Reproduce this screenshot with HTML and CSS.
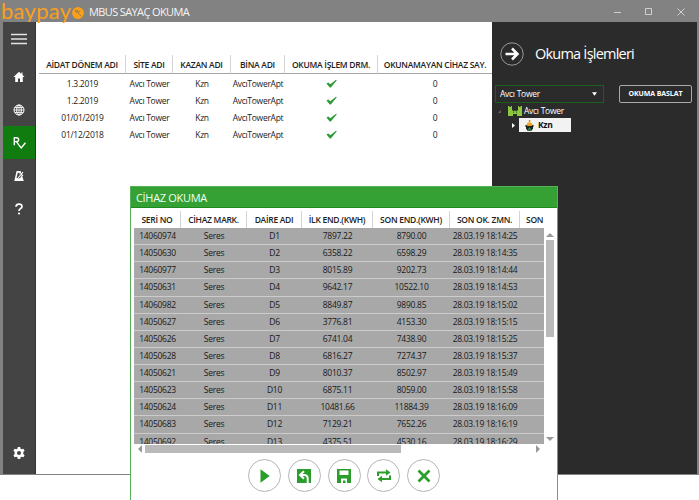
FILE: index.html
```html
<!DOCTYPE html>
<html lang="tr">
<head>
<meta charset="utf-8">
<title>MBUS SAYAÇ OKUMA</title>
<link rel="stylesheet" href="styles.css">
</head>
<body>
<div class="window">
  <header class="titlebar">
    <span class="brand">baypay</span>
    <svg class="brand-mark" viewBox="0 0 12 12"><circle cx="6" cy="6" r="5.900" fill="#f9a01b"/><path d="M3 4.500l2.500 1M5 3l1.500 2.500M5.500 5.500l4 4M8 3.500l-1.500 2" fill="none" stroke="#8a7656" stroke-width=".9"/><circle cx="4" cy="3.500" r=".8" fill="#8a7656"/></svg>
    <h1>MBUS SAYAÇ OKUMA</h1>
    <svg class="controls" viewBox="0 0 72 10" fill="none" stroke="#d0d0d0"><path d="M0 5.500h7M31.500 1.500h6v6h-6zM63.500 1.500l7 7m0-7l-7 7"/></svg>
  </header>
  <div class="body">
    <nav class="sidebar">
      <a class="burger"><svg viewBox="0 0 16 12"><path d="M0 1.500h16M0 6h16M0 10.500h16" stroke="#e4e4e4" stroke-width="1.600"/></svg></a>
      <a><svg viewBox="0 0 12 12"><path d="M6 .8L.5 6h1.700v5h2.800V7.500h2V11h2.800V6h1.700L9.500 4V1.500H8.300v1.400z" fill="#fff"/></svg></a>
      <a><svg viewBox="0 0 12 12" fill="none" stroke="#fff"><circle cx="6" cy="6" r="5"/><ellipse cx="6" cy="6" rx="2.300" ry="5"/><path d="M1 6h10M1.800 3.500h8.400M1.800 8.500h8.400M6 1v10" stroke-width=".8"/></svg></a>
      <a class="active"><svg viewBox="0 0 12 12" fill="none" stroke="#fff" stroke-width="1.300"><path d="M1.200 8.500V1.600h2q2 0 2 1.800t-2 1.800h-2m2 0l2.300 3.300M5.500 8.600L7.600 11l3.900-4.800"/></svg></a>
      <a><svg viewBox="0 0 12 12"><path d="M1.300 11L3.600 1h4L10.800 11z" fill="#fff"/><path d="M3.500 8L4.800 2.800h1.600L7.500 8z" fill="#444"/><path d="M5 8l5.500-6" stroke="#444" stroke-width="2.200"/><path d="M5 8l5-5.800M8 4.200l2 1.500" stroke="#fff" stroke-width="1.100"/></svg></a>
      <a><svg viewBox="0 0 12 12"><path d="M3 3.800Q3.100 1.200 6 1.200t3 2.300Q9 4.800 7.300 5.800 6 6.500 6 8" fill="none" stroke="#fff" stroke-width="1.700"/><circle cx="6" cy="10.500" r="1.100" fill="#fff"/></svg></a>
      <a class="settings"><svg viewBox="0 0 12 12"><path d="M4.800 0h2.400l.4 1.700 1.100.6 1.700-.6 1.200 2.100L10.300 5v2l1.300 1.200-1.200 2.100-1.700-.6-1.100.6L7.200 12H4.800l-.4-1.700-1.100-.6-1.700.6L.4 8.200 1.700 7V5L.4 3.800l1.200-2.100 1.700.6 1.100-.6z" fill="#fff"/><circle cx="6" cy="6" r="2" fill="#444"/></svg></a>
    </nav>
    <main>
      <table class="grid periods">
        <colgroup><col class="p1"><col class="p2"><col class="p3"><col class="p4"><col class="p5"><col class="p6"></colgroup>
        <thead><tr><th>AİDAT DÖNEM ADI</th><th>SİTE ADI</th><th>KAZAN ADI</th><th>BİNA ADI</th><th>OKUMA İŞLEM DRM.</th><th>OKUNAMAYAN CİHAZ SAY.</th></tr></thead>
        <tbody>
          <tr><td>1.3.2019</td><td>Avcı Tower</td><td>Kzn</td><td>AvcıTowerApt</td><td><svg class="tick" viewBox="0 0 11 9"><path d="M.5 4.500l1.800-1 2 1.800L10 .7l.8.5L4.800 8.500h-1z"/></svg></td><td>0</td></tr>
          <tr><td>1.2.2019</td><td>Avcı Tower</td><td>Kzn</td><td>AvcıTowerApt</td><td><svg class="tick" viewBox="0 0 11 9"><path d="M.5 4.500l1.800-1 2 1.800L10 .7l.8.5L4.800 8.500h-1z"/></svg></td><td>0</td></tr>
          <tr><td>01/01/2019</td><td>Avcı Tower</td><td>Kzn</td><td>AvcıTowerApt</td><td><svg class="tick" viewBox="0 0 11 9"><path d="M.5 4.500l1.800-1 2 1.800L10 .7l.8.5L4.800 8.500h-1z"/></svg></td><td>0</td></tr>
          <tr><td>01/12/2018</td><td>Avcı Tower</td><td>Kzn</td><td>AvcıTowerApt</td><td><svg class="tick" viewBox="0 0 11 9"><path d="M.5 4.500l1.800-1 2 1.800L10 .7l.8.5L4.800 8.500h-1z"/></svg></td><td>0</td></tr>
        </tbody>
      </table>
    </main>
    <aside>
      <div class="panel-head">
        <svg viewBox="0 0 24 24" fill="none"><circle cx="12" cy="12" r="11.200" stroke="#999"/><path d="M5.500 12h12M12 6.500l5.500 5.500-5.500 5.500" stroke="#fff" stroke-width="2.500"/></svg>
        <h2>Okuma İşlemleri</h2>
      </div>
      <div class="panel-tools">
        <div class="select"><span>Avcı Tower</span><svg viewBox="0 0 5 4"><path d="M0 .3h5L2.500 3.700z" fill="#fff"/></svg></div>
        <button>OKUMA BASLAT</button>
      </div>
      <div class="tree">
        <div class="node"><svg class="collapse" viewBox="0 0 4 4"><path d="M4 0v4H0z" fill="#666"/></svg><svg class="castle" viewBox="0 0 14 10"><path d="M0 0h1.500v1H3V0h1v4l2 1.500L7 4l1 1.500L10 4V0h1v1h1.500V0H14v10H9V8H5v2H0z" fill="#8cc63f"/><path d="M5 6.300h1m2 0h1" stroke="#2b2b2b" stroke-width=".7"/></svg><span>Avcı Tower</span></div>
        <div class="node child"><svg class="expand" viewBox="0 0 3 5"><path d="M0 0l3 2.500L0 5z" fill="#fff"/></svg><div class="leaf"><svg viewBox="0 0 9 11"><path d="M1 5h7l1 1-1 1v1.500L6.500 10.700h-4L1 8.500V7L0 6z" fill="#17251c"/><path d="M1.300 5Q2 2.300 4.500 2.300T7.700 5L6.500 6h-4z" fill="#eea51c"/><path d="M3.800 0h1.500v2H3.800z" fill="#d98b18"/><path d="M3 9l1.500-1.800L6 9v.8H3z" fill="#26945a"/></svg><b>Kzn</b></div></div>
      </div>
    </aside>
  </div>
</div>
<section class="dialog">
  <h3>CİHAZ OKUMA</h3>
  <div class="viewport">
    <div class="list">
      <table class="grid devices">
        <colgroup><col class="d1"><col class="d2"><col class="d3"><col class="d4"><col class="d5"><col class="d6"><col class="d7"></colgroup>
        <thead><tr><th>SERİ NO</th><th>CİHAZ MARK.</th><th>DAİRE ADI</th><th>İLK END.(KWH)</th><th>SON END.(KWH)</th><th>SON OK. ZMN.</th><th>SON</th></tr></thead>
        <tbody>
          <tr><td>14060974</td><td>Seres</td><td>D1</td><td>7897.22</td><td>8790.00</td><td>28.03.19 18:14:25</td><td></td></tr>
          <tr><td>14050630</td><td>Seres</td><td>D2</td><td>6358.22</td><td>6598.29</td><td>28.03.19 18:14:35</td><td></td></tr>
          <tr><td>14060977</td><td>Seres</td><td>D3</td><td>8015.89</td><td>9202.73</td><td>28.03.19 18:14:44</td><td></td></tr>
          <tr><td>14050631</td><td>Seres</td><td>D4</td><td>9642.17</td><td>10522.10</td><td>28.03.19 18:14:53</td><td></td></tr>
          <tr><td>14060982</td><td>Seres</td><td>D5</td><td>8849.87</td><td>9890.85</td><td>28.03.19 18:15:02</td><td></td></tr>
          <tr><td>14050627</td><td>Seres</td><td>D6</td><td>3776.81</td><td>4153.30</td><td>28.03.19 18:15:15</td><td></td></tr>
          <tr><td>14050626</td><td>Seres</td><td>D7</td><td>6741.04</td><td>7438.90</td><td>28.03.19 18:15:25</td><td></td></tr>
          <tr><td>14050628</td><td>Seres</td><td>D8</td><td>6816.27</td><td>7274.37</td><td>28.03.19 18:15:37</td><td></td></tr>
          <tr><td>14050621</td><td>Seres</td><td>D9</td><td>8010.37</td><td>8502.97</td><td>28.03.19 18:15:49</td><td></td></tr>
          <tr><td>14050623</td><td>Seres</td><td>D10</td><td>6875.11</td><td>8059.00</td><td>28.03.19 18:15:58</td><td></td></tr>
          <tr><td>14050624</td><td>Seres</td><td>D11</td><td>10481.66</td><td>11884.39</td><td>28.03.19 18:16:09</td><td></td></tr>
          <tr><td>14050683</td><td>Seres</td><td>D12</td><td>7129.21</td><td>7652.26</td><td>28.03.19 18:16:19</td><td></td></tr>
          <tr><td>14050692</td><td>Seres</td><td>D13</td><td>4375.51</td><td>4530.16</td><td>28.03.19 18:16:29</td><td></td></tr>
        </tbody>
      </table>
    </div>
    <div class="vscroll"><i class="up"></i><b></b><i class="down"></i></div>
  </div>
  <div class="hscroll"><i class="left"></i><b></b><i class="right"></i></div>
  <div class="actions">
    <a><svg viewBox="0 0 14 14"><path d="M2.500 .3L11.700 7l-9.200 6.700z"/></svg></a>
    <a><svg viewBox="0 0 14 14"><path d="M0 0h14v14H0z"/><path d="M7 2.200L3 6l4 3.800M3.500 6h4.200q3 .2 3 3.500V14" fill="none" stroke="#fff" stroke-width="2"/></svg></a>
    <a><svg viewBox="0 0 14 14"><path d="M0 0h14v14H0z"/><path d="M2.500 1.500h9v4.500h-9zM4 9.500h6V14H8.500v-2.500H6V14H4z" fill="#fff"/></svg></a>
    <a><svg viewBox="0 0 14 14"><path d="M1 7V3.500h8.500M13 6.500V10H4.500" fill="none" stroke="#2a9d2a" stroke-width="2"/><path d="M9 .3l4.500 3.200L9 6.700zM5 6.800L.5 10 5 13.200z"/></svg></a>
    <a><svg viewBox="0 0 14 14"><path d="M1.500 1.500l11 11m0-11l-11 11" fill="none" stroke="#2a9d2a" stroke-width="2.800"/></svg></a>
  </div>
</section>
</body>
</html>
```
FILE: styles.css
```css
* { box-sizing: border-box; }
body { margin: 0; width: 699px; height: 500px; overflow: hidden; position: relative; background: #fff; color: #222; font: 8.5px/12px "Open Sans", "Noto Sans", sans-serif; letter-spacing: -.28px; }
svg { display: block; }
h1, h2, h3 { margin: 0; font-weight: 400; }
.window { height: 475px; border: solid #828282; border-width: 0 2px 1px 3px; display: flex; flex-direction: column; }
.titlebar { height: 22px; flex: none; background: #828282; display: flex; align-items: center; color: #f5f5f5; }
.brand { width: 69px; margin-left: -2px; color: #f9a01b; font: 400 22px/22px Lato, sans-serif; letter-spacing: .3px; }
.brand-mark { width: 12px; height: 12px; margin: 4px 0 0 2px; }
h1 { margin-left: 5px; font-size: 11px; line-height: 20px; padding-top: 2px; letter-spacing: -.62px; white-space: nowrap; }
.controls { width: 72px; height: 10px; margin: 1px 11px 0 auto; }
.body { flex: 1; min-height: 0; display: flex; }
.sidebar { width: 33px; background: #444; border-right: 1px solid #333; display: flex; flex-direction: column; }
.sidebar a { height: 33px; flex: none; display: grid; place-items: center; }
.sidebar svg { width: 12px; height: 12px; }
.sidebar .burger { height: 33px; margin-bottom: 5px; }
.sidebar .burger svg { width: 16px; }
.sidebar .active { background: #107c10; }
.sidebar .active svg { width: 13px; height: 13px; }
.sidebar .settings { margin: auto 0 5px; }
main { width: 456px; padding: 33px 0 0 3px; }
.grid { border-collapse: separate; border-spacing: 0; table-layout: fixed; }
th, td { padding: 0; text-align: center; white-space: nowrap; }
th { font-weight: 600; color: #222; border-right: 1px solid #d4d4d4; }
th:last-child { border-right: 0; }
.periods { width: 453px; }
.periods th { height: 19px; padding-top: 2px; border-bottom: 1px solid #a5a5a5; }
.periods tbody tr { height: 17.130px; }
.periods tbody td { height: 17px; padding-top: 3px; }
.p1 { width: 87px; } .p2 { width: 47px; } .p3 { width: 58px; } .p4 { width: 54px; } .p5 { width: 93px; } .p6 { width: 114px; }
.tick { width: 11px; height: 9px; margin: -2px auto 0; fill: #2b9a32; }
aside { flex: 1; background: #2b2b2b; color: #fff; }
.panel-head { height: 63px; display: flex; align-items: center; padding-left: 8px; }
.panel-head svg { width: 24px; height: 24px; }
h2 { margin-left: 11px; font-size: 14.5px; line-height: 20px; letter-spacing: -.78px; }
.panel-tools { display: flex; height: 18px; padding-left: 3px; gap: 15px; }
.select { width: 109px; height: 18px; border: 1px solid #1c5e1c; display: flex; align-items: center; justify-content: space-between; padding: 0 6px 0 4px; }
.select svg { width: 5px; height: 4px; }
button { width: 73px; height: 18px; padding: 0; border: 1px solid #aaa; border-radius: 2px; background: transparent; color: #fff; font: 700 7px/10px "Open Sans", sans-serif; letter-spacing: -.1px; }
.tree { padding: 1px 0 0 6px; }
.node { height: 14px; display: flex; align-items: center; }
.collapse { width: 3px; height: 3px; }
.castle { width: 14px; height: 10px; margin: 0 2px 0 7px; }
.child { height: 14px; padding-left: 14px; }
.expand { width: 3px; height: 5px; margin-right: 4px; }
.leaf { width: 52px; height: 14px; background: #f2f2f2; color: #111; display: flex; align-items: center; padding-left: 6px; gap: 4px; }
.leaf svg { width: 9px; height: 11px; }
.dialog { position: absolute; left: 130px; top: 186px; width: 428px; height: 320px; background: #fff; border: 1px solid #55b155; }
h3 { height: 21px; background: #35a135; border-bottom: 1px solid #1b8c1b; color: #f2fff2; font-size: 11px; line-height: 22px; padding-left: 5px; letter-spacing: -.32px; }
.viewport { display: flex; height: 236px; padding: 3px 0 0 3px; }
.list { width: 410px; overflow: hidden; }
.devices { width: 452px; }
.devices th { height: 17px; }
.devices tbody td { height: 17.130px; background: #a8a8a8; border-bottom: 1px solid #ccc; color: #181818; }
.d1 { width: 47px; } .d2 { width: 66px; } .d3 { width: 55px; } .d4 { width: 71px; } .d5 { width: 77px; } .d6 { width: 70px; } .d7 { width: 66px; }
.devices th:last-child { text-align: left; padding-left: 6px; }
.vscroll { width: 9px; margin-left: 1px; padding: 22px 0 3px; display: flex; flex-direction: column; align-items: center; }
.vscroll b { width: 8px; height: 97px; margin-top: 3px; background: #bababa; }
.up, .down { border: solid transparent; border-width: 0 4px; }
.up { border-bottom: 4px solid #999; }
.down { margin-top: auto; border-top: 4px solid #999; }
.hscroll { height: 9px; display: flex; align-items: center; padding-left: 7px; }
.hscroll b { width: 256px; height: 8px; margin-left: 3px; background: #bababa; }
.left, .right { border: solid transparent; border-width: 4px 0; }
.left { border-right: 4px solid #999; }
.right { border-left: 4px solid #999; margin-left: 135px; }
.actions { display: flex; gap: 6.800px; padding: 6px 0 0 117px; }
.actions a { width: 33px; height: 33px; border: 1px solid #b5b5b5; border-radius: 50%; display: grid; place-items: center; }
.actions svg { width: 14px; height: 14px; fill: #2a9d2a; }
```
